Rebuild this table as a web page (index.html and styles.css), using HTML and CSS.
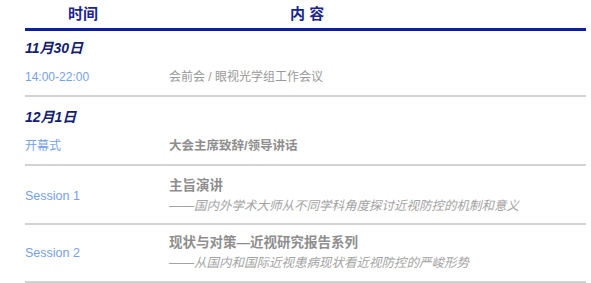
FILE: index.html
```html
<!DOCTYPE html>
<html lang="zh-CN">
<head>
<meta charset="utf-8">
<title>会议日程</title>
<link rel="stylesheet" href="styles.css">
</head>
<body>
<div class="schedule">
  <div class="schedule-head">
    <div class="head-time">时间</div>
    <div class="head-content">内 容</div>
  </div>

  <section class="day">
    <h3 class="day-date">11月30日</h3>
    <div class="item">
      <div class="item-time">14:00-22:00</div>
      <div class="item-body"><p class="plain">会前会 / 眼视光学组工作会议</p></div>
    </div>
  </section>

  <section class="day">
    <h3 class="day-date">12月1日</h3>
    <div class="item">
      <div class="item-time">开幕式</div>
      <div class="item-body"><p class="title small">大会主席致辞/领导讲话</p></div>
    </div>
  </section>

  <section class="day session">
    <div class="item">
      <div class="item-time">Session 1</div>
      <div class="item-body">
        <p class="title">主旨演讲</p>
        <p class="sub">——国内外学术大师从不同学科角度探讨近视防控的机制和意义</p>
      </div>
    </div>
  </section>

  <section class="day session">
    <div class="item">
      <div class="item-time">Session 2</div>
      <div class="item-body">
        <p class="title">现状与对策—近视研究报告系列</p>
        <p class="sub">——从国内和国际近视患病现状看近视防控的严峻形势</p>
      </div>
    </div>
  </section>
</div>
</body>
</html>
```

FILE: styles.css
```css
* { box-sizing: border-box; }

html, body {
  margin: 0;
  padding: 0;
  background: #fff;
}

body {
  font-family: "Liberation Sans", "Noto Sans CJK SC", sans-serif;
}

.schedule {
  margin-left: 25px;
  width: 561px;
}

/* column header with the blue rule under it */
.schedule-head {
  display: grid;
  grid-template-columns: 144px 1fr;
  height: 31px;
  line-height: 28px;
  border-bottom: 3px solid #0c1f9e;
  font-size: 15px;
  font-weight: bold;
  color: #1b2590;
}

.head-time { padding-left: 43px; }
.head-content { padding-left: 121px; }

/* one day / session block, closed by a grey rule */
.day {
  padding: 7px 0 8px;
  border-bottom: 2px solid #d3d3d3;
}

.day + .day { padding-top: 10px; }

.day-date {
  margin: 0 0 9px;
  height: 20px;
  line-height: 20px;
  font-size: 14px;
  font-weight: bold;
  font-style: italic;
  color: #14206e;
}

.item {
  display: grid;
  grid-template-columns: 144px 1fr;
  align-items: center;
}

.item-time {
  font-size: 12px;
  line-height: 20px;
  color: #76a0ee;
}

.item-body p {
  margin: 0;
  line-height: 20px;
}

.plain {
  font-size: 12px;
  color: #9a9a9a;
}

.title {
  font-size: 13.5px;
  font-weight: bold;
  color: #8e8e8e;
}

.title.small { font-size: 12.5px; }

.sub {
  font-size: 12.5px;
  font-style: italic;
  color: #a3a3a3;
}

.day.session { padding: 10px 0 7px; }
.day.session + .day.session { padding: 8px 0 8px; }

.session .item-time { font-size: 12.5px; }
```
